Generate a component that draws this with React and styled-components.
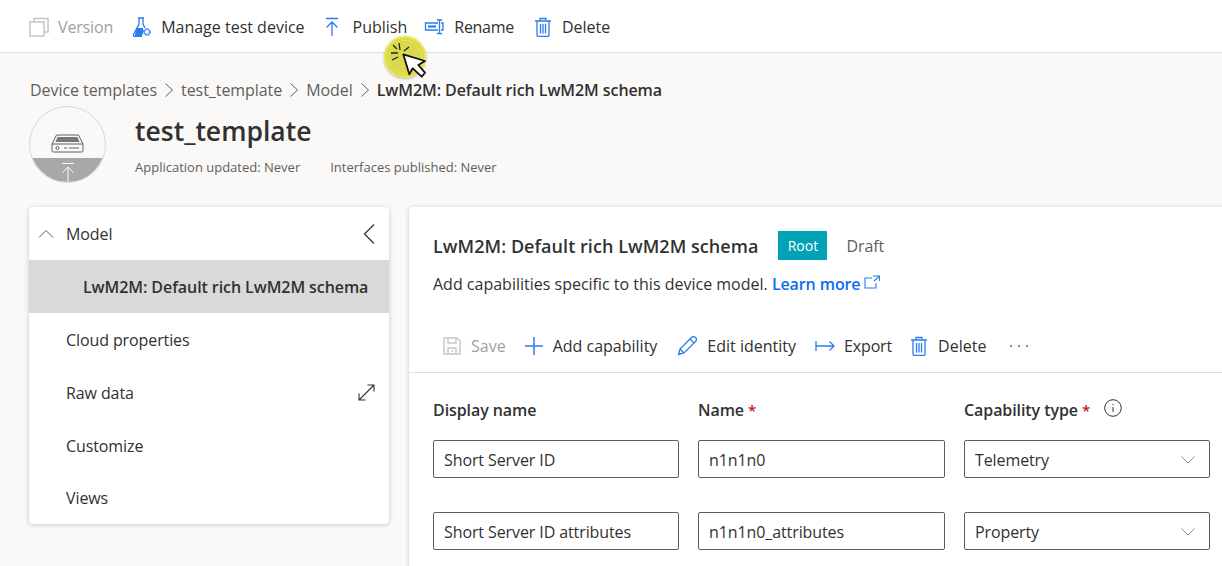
import React from 'react'
import styled, { createGlobalStyle } from 'styled-components'

const Global = createGlobalStyle`
  html, body { margin: 0; padding: 0; height: 100%; overflow: hidden; background: #faf9f8; }
  * { box-sizing: border-box; }
  body { font-family: "Open Sans", "Noto Sans", sans-serif; color: #323130; }
`

const Page = styled.div`
  position: relative;
  width: 1222px;
  height: 566px;
  overflow: hidden;
`

const TopBar = styled.div`
  height: 53px;
  background: #fff;
  border-bottom: 1px solid #e1dfdd;
  display: flex;
  align-items: center;
  padding: 2px 0 0 29px;
`

const Action = styled.div`
  display: flex;
  align-items: center;
  gap: ${p => p.$gap || 8}px;
  margin-right: ${p => p.$mr || 0}px;
  font-size: 16px;
  letter-spacing: ${p => p.$ls || 0}px;
  color: ${p => (p.$disabled ? '#a19f9d' : '#323130')};
  white-space: nowrap;
  svg { flex: none; display: block; }
`

const Header = styled.div`
  padding: 26px 0 0 29px;
`

const Crumbs = styled.div`
  display: flex;
  align-items: center;
  height: 22px;
  margin-left: 1px;
  font-size: 16px;
  letter-spacing: -0.06px;
  color: #605e5c;
  gap: 7px;
  b { font-weight: 600; color: #323130; letter-spacing: -0.08px; }
`

const Identity = styled.div`
  display: flex;
  margin-top: 5px;
  height: 77px;
  gap: 29px;
`

const Avatar = styled.div`
  position: relative;
  width: 77px;
  height: 77px;
  border-radius: 50%;
  border: 1px solid #d9d8d6;
  overflow: hidden;
  background: #faf9f8;
  display: flex;
  flex-direction: column;
`

const AvatarTop = styled.div`
  flex: 1;
  display: flex;
  align-items: center;
  justify-content: center;
  padding-top: 22px;
`

const AvatarBottom = styled.div`
  height: 24px;
  background: #a8a8a6;
  display: flex;
  justify-content: center;
  padding-top: 5px;
`

const Title = styled.h1`
  margin: 7px 0 0;
  font-size: 26.5px;
  line-height: 36px;
  font-weight: 600;
  color: #323130;
`

const Meta = styled.div`
  display: flex;
  gap: 30px;
  margin-top: 9px;
  font-size: 13px;
  color: #605e5c;
`

const Main = styled.div`
  display: flex;
  gap: 20px;
  margin-top: 24px;
  padding-left: 29px;
  align-items: flex-start;
`

const Nav = styled.nav`
  width: 360px;
  height: 317px;
  flex: none;
  background: #fff;
  border-radius: 4px;
  box-shadow: 0 1px 5px rgba(0, 0, 0, 0.2);
  overflow: hidden;
`

const NavRow = styled.div`
  height: 53px;
  display: flex;
  align-items: center;
  justify-content: space-between;
  padding: 0 ${p => (p.$selected ? '20px' : '14px')} 0 ${p => (p.$selected ? '54px' : '37px')};
  font-size: 16px;
  letter-spacing: ${p => (p.$selected ? '-0.08px' : '-0.1px')};
  font-weight: ${p => (p.$selected ? 600 : 400)};
  background: ${p => (p.$selected ? '#d9d9d9' : 'transparent')};
  white-space: nowrap;
  &:last-child { height: 51px; }
`

const NavHead = styled.span`
  display: flex;
  align-items: center;
  gap: 12px;
  margin-left: -28px;
`

const Panel = styled.section`
  width: 900px;
  height: 400px;
  flex: none;
  background: #fff;
  border-radius: 4px 0 0 0;
  box-shadow: 0 1px 5px rgba(0, 0, 0, 0.2);
`

const PanelHead = styled.div`
  padding: 24px 0 0 24px;
`

const HeadRow = styled.div`
  display: flex;
  align-items: center;
  height: 29px;
`

const PanelTitle = styled.h2`
  margin: 0;
  font-size: 18px;
  font-weight: 600;
  letter-spacing: 0.05px;
  color: #323130;
`

const Badge = styled.span`
  margin-left: 20px;
  width: 49px;
  height: 29px;
  background: #00a2b5;
  color: #fff;
  font-size: 14px;
  display: flex;
  align-items: center;
  justify-content: center;
`

const Draft = styled.span`
  margin-left: 19px;
  font-size: 16px;
  letter-spacing: -0.1px;
  color: #605e5c;
`

const Desc = styled.div`
  display: flex;
  align-items: center;
  margin-top: 12px;
  height: 24px;
  font-size: 16px;
  color: #323130;
  white-space: pre;
  a { color: #0f6cf0; font-weight: 600; letter-spacing: -0.1px; }
  svg { margin: 0 0 4px 4px; }
`

const ModelBar = styled.div`
  height: 53px;
  margin-top: 24px;
  padding-left: 34px;
  border-bottom: 1px solid #e1dfdd;
  display: flex;
  align-items: center;
`

const Form = styled.div`
  display: grid;
  grid-template-columns: 246px 247px 246px;
  column-gap: 19px;
  padding: 20px 0 0 24px;
`

const Label = styled.div`
  display: flex;
  align-items: center;
  height: 34px;
  margin-bottom: 13px;
  font-size: 16px;
  font-weight: 600;
  letter-spacing: -0.08px;
  color: #323130;
  i { color: #c50f1f; font-style: normal; font-size: 15px; margin-left: 4px; }
  svg { margin: 0 0 5px 14px; }
`

const Input = styled.div`
  height: 38px;
  margin-bottom: 34px;
  border: 1px solid #605e5c;
  border-radius: 2px;
  background: #fff;
  display: flex;
  align-items: center;
  justify-content: space-between;
  padding: 1px 14px 0 10px;
  font-size: 16px;
  letter-spacing: -0.1px;
  color: #323130;
`

const CursorGlow = styled.div`
  position: absolute;
  left: 384px;
  top: 36px;
  width: 42px;
  height: 42px;
  border-radius: 50%;
  background: #d9d84f;
  border: 2px solid #ece845;
  box-shadow: 0 1px 3px rgba(0, 0, 0, 0.25);
  &::after {
    content: '';
    position: absolute;
    inset: 2px;
    border-radius: 50%;
    border: 1px solid #e8e64a;
  }
`

const CursorArt = styled.svg`
  position: absolute;
  left: 380px;
  top: 32px;
`

const blue = '#2b7cf0'

const Ic = ({ children, w = 20, h = 20, sw = 1.3, c = blue }) => (
  <svg width={w} height={h} viewBox={`0 0 ${w} ${h}`} fill="none" stroke={c} strokeWidth={sw}>{children}</svg>
)

const Trash = () => (
  <Ic w={18} h={20}>
    <path d="M1 4h16M6 4V1.500h6V4M3 4v14a1.500 1.500 0 0 0 1.500 1.500h9A1.500 1.500 0 0 0 15 18V4M6.500 7v9.500M9 7v9.500M11.500 7v9.500" />
  </Ic>
)

const Chevron = () => (
  <svg width="14" height="8" viewBox="0 0 14 8" fill="none" stroke="#8a8886" strokeWidth="1"><path d="M.5.5 7 7l6.500-6.500" /></svg>
)

const Sep = () => (
  <svg width="10" height="16" viewBox="0 0 10 16" fill="none" stroke="#605e5c" strokeWidth="1"><path d="m1.500 1.500 7 6.500-7 6.500" /></svg>
)

const Star = () => <i>*</i>

const rows = [
  ['Short Server ID', 'n1n1n0', 'Telemetry'],
  ['Short Server ID attributes', 'n1n1n0_attributes', 'Property'],
]

export default function App() {
  return (
    <Page>
      <Global />
      <TopBar>
        <Action $disabled $gap={9} $mr={19} $ls={-0.15}>
          <Ic c="#c8c6c4" sw={1.500}>
            <path d="M5 5V1.500h14v13.500h-4M1 5h14v14H1z" />
          </Ic>
          Version
        </Action>
        <Action $gap={9} $mr={19}>
          <svg width="20" height="20" viewBox="0 0 20 20">
            <path d="M6 1h6M7 1v6L1.500 17.500c-.4 1 .2 1.800 1 1.800H10" fill="none" stroke={blue} strokeWidth="1.300" />
            <path d="M11 1v6l2 4" fill="none" stroke={blue} strokeWidth="1.300" />
            <path d="M4.800 11h6l1 3-2 5H2.500z" fill={blue} />
            <circle cx="15" cy="15" r="2.800" fill="none" stroke={blue} strokeWidth="1.800" strokeDasharray="1.600 .6" />
          </svg>
          Manage test device
        </Action>
        <Action $gap={13} $mr={17}>
          <Ic w={16} h={20}>
            <path d="M2 1.500h12M8 19V5M2.500 10.500 8 5l5.500 5.500" />
          </Ic>
          Publish
        </Action>
        <Action $gap={10} $mr={20} $ls={-0.3}>
          <Ic>
            <path d="M14 6H1.500v7H14M17 6h2v7h-2" />
            <path d="M4 9.500h8" strokeWidth="2.200" />
            <path d="M13 3h2.500M18 3h-2.500v13.500M13 16.500h5" />
          </Ic>
          Rename
        </Action>
        <Action $gap={10}>
          <Trash />
          Delete
        </Action>
      </TopBar>

      <Header>
        <Crumbs>
          <span>Device templates</span><Sep />
          <span>test_template</span><Sep />
          <span>Model</span><Sep />
          <b>LwM2M: Default rich LwM2M schema</b>
        </Crumbs>
        <Identity>
          <Avatar>
            <AvatarTop>
              <svg width="33" height="19" viewBox="0 0 33 19" fill="none" stroke="#605e5c" strokeWidth="1">
                <path d="M1 10 5.500 1h22L32 10v6.500a1.500 1.500 0 0 1-1.500 1.500h-28A1.500 1.500 0 0 1 1 16.500zM1 10h31" />
                <path d="M6.500 3h20l2 5h-24z" fill="#77767a" stroke="none" />
                <circle cx="6.500" cy="14" r="1.500" />
                <path d="M13 14h3M18 14h10" />
              </svg>
            </AvatarTop>
            <AvatarBottom>
              <svg width="14" height="19" viewBox="0 0 14 19" fill="none" stroke="#fff" strokeWidth="1"><path d="M1 .5h12M7 19V4M1.500 9.500 7 4l5.500 5.500" /></svg>
            </AvatarBottom>
          </Avatar>
          <div>
            <Title>test_template</Title>
            <Meta>
              <span>Application updated: Never</span>
              <span>Interfaces published: Never</span>
            </Meta>
          </div>
        </Identity>
      </Header>

      <Main>
        <Nav>
          <NavRow>
            <NavHead>
              <svg width="16" height="9" viewBox="0 0 16 9" fill="none" stroke="#605e5c" strokeWidth="1"><path d="m1 8.500 7-7 7 7" /></svg>
              Model
            </NavHead>
            <svg width="12" height="20" viewBox="0 0 12 20" fill="none" stroke="#323130" strokeWidth="1.200"><path d="M11 .5 1.500 10 11 19.500" /></svg>
          </NavRow>
          <NavRow $selected>LwM2M: Default rich LwM2M schema</NavRow>
          <NavRow>Cloud properties</NavRow>
          <NavRow>
            Raw data
            <svg width="17" height="17" viewBox="0 0 17 17" fill="none" stroke="#323130" strokeWidth="1.100"><path d="M1 16 16 1M9.500 1H16v6.500M1 9.500V16h6.500" /></svg>
          </NavRow>
          <NavRow>Customize</NavRow>
          <NavRow>Views</NavRow>
        </Nav>

        <Panel>
          <PanelHead>
            <HeadRow>
              <PanelTitle>LwM2M: Default rich LwM2M schema</PanelTitle>
              <Badge>Root</Badge>
              <Draft>Draft</Draft>
            </HeadRow>
            <Desc>
              Add capabilities specific to this device model. <a>Learn more</a>
              <svg width="16" height="14" viewBox="0 0 16 14" fill="none" stroke={blue} strokeWidth="1.100"><path d="M8 3H1v10h11V8M9 1h6.500v5M15.500 1 10 6" /></svg>
            </Desc>
          </PanelHead>
          <ModelBar>
            <Action $disabled $gap={10} $mr={18}>
              <Ic w={18} h={18} c="#c8c6c4" sw={1.400}>
                <path d="M1 1h13l3 3v13H1zM5 1v5h8V1M5 17v-6h8v6M9.500 13v2" />
              </Ic>
              Save
            </Action>
            <Action $gap={9} $mr={20}>
              <Ic sw={1.500}><path d="M10 1v18M1 10h18" /></Ic>
              Add capability
            </Action>
            <Action $gap={10} $mr={19}>
              <Ic>
                <path d="M1.500 18.500 3 13 14.500 1.500a2 2 0 0 1 4 4L7 17zM3 13l4 4M13 3l4 4" />
              </Ic>
              Edit identity
            </Action>
            <Action $gap={9} $mr={18} $ls={-0.15}>
              <Ic w={20} h={12}><path d="M1 1v10M1 6h18M14.500 1.500 19 6l-4.500 4.500" /></Ic>
              Export
            </Action>
            <Action $gap={10} $mr={23}>
              <Trash />
              Delete
            </Action>
            <svg width="20" height="4" viewBox="0 0 20 4" fill="#605e5c"><circle cx="2" cy="2" r="1" /><circle cx="10" cy="2" r="1" /><circle cx="18" cy="2" r="1" /></svg>
          </ModelBar>
          <Form>
            <Label>Display name</Label>
            <Label>Name<Star /></Label>
            <Label>
              Capability type<Star />
              <svg width="18" height="18" viewBox="0 0 18 18" fill="none" stroke="#323130" strokeWidth="1"><circle cx="9" cy="9" r="8.300" /><path d="M9 8v5M9 5v1.200" /></svg>
            </Label>
            {rows.map(r => (
              <React.Fragment key={r[0]}>
                <Input>{r[0]}</Input>
                <Input>{r[1]}</Input>
                <Input>{r[2]}<Chevron /></Input>
              </React.Fragment>
            ))}
          </Form>
        </Panel>
      </Main>

      <CursorGlow />
      <CursorArt width="50" height="50" viewBox="0 0 50 50" fill="none">
        <path d="M11 21h7M12 28l6-3M19 11l1 7M29 15l-5 4M13 13l4 4" stroke="#222" strokeWidth="1.300" />
        <path d="M23.300 22.300 29.300 42.300 32.700 36.300 41.700 44.700 45 40.700 38.300 33 45 29z" fill="#fff" stroke="#111" strokeWidth="1.800" strokeLinejoin="round" />
      </CursorArt>
    </Page>
  )
}
